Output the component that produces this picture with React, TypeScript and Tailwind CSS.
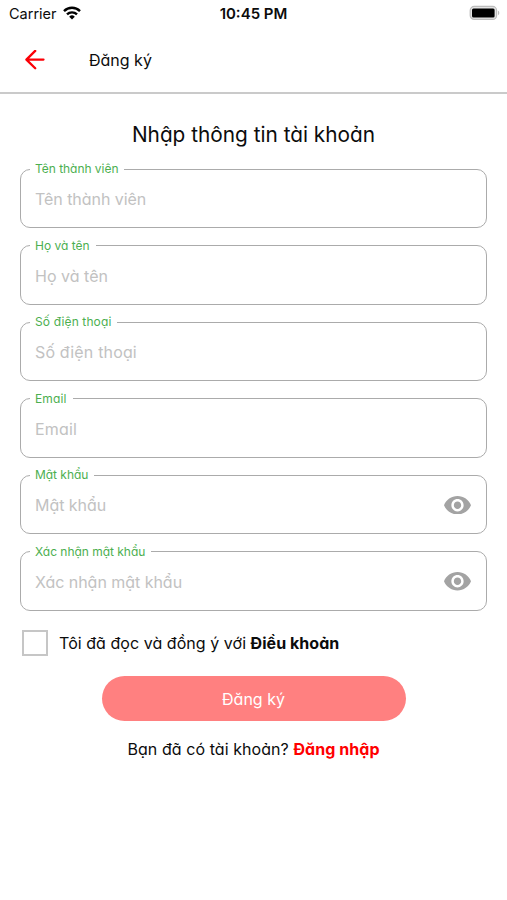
import React, { useState } from "react"
import clsx from "clsx"

const fields = [
	{ label: "Tên thành viên", spacing: "tracking-[-0.003em]" },
	{ label: "Họ và tên", spacing: "tracking-[0.001em]" },
	{ label: "Số điện thoại", spacing: "tracking-[0.01em]" },
	{ label: "Email", spacing: "tracking-[0.012em]" },
	{ label: "Mật khẩu", spacing: "tracking-[-0.003em]", secure: true },
	{ label: "Xác nhận mật khẩu", spacing: "tracking-[-0.002em]", secure: true },
]

const WifiIcon = () => (
	<svg viewBox="0 0 18 14" className="-mt-[2px] h-[14px] w-[18px]" fill="none" stroke="#000" strokeWidth="2.4">
		<path d="M1 5.1a11.4 11.4 0 0 1 16 0" />
		<path d="M4 8.4a7.1 7.1 0 0 1 10 0" />
		<path d="M9 13.6 6.2 10.7a4 4 0 0 1 5.6 0Z" fill="#000" stroke="none" />
	</svg>
)

const BatteryIcon = () => (
	<svg viewBox="0 0 32 16" className="-mt-px h-[16px] w-[32px]">
		<rect x="1.2" y="1.4" width="26.4" height="13" rx="4" fill="#e4e4e4" stroke="#bdbdbd" strokeWidth="1.2" />
		<rect x="3" y="3.4" width="22.6" height="9.2" rx="1.5" fill="#000" />
		<path d="M29 5.8c1.7.6 1.7 3.8 0 4.4Z" fill="#bdbdbd" />
	</svg>
)

const BackIcon = () => (
	<svg viewBox="0 0 20 20" className="h-5 w-5" fill="none" stroke="#fb0007" strokeWidth="2.3" strokeLinecap="round" strokeLinejoin="round">
		<path d="M18.5 9.6H1.5M10.2 .9 1.4 9.6l8.8 8.7" />
	</svg>
)

const EyeIcon = () => (
	<svg viewBox="1 4.5 22 15" className="-mt-px h-[18.5px] w-[27px]" fill="#a3a3a3">
		<path d="M12 4.5C7 4.5 2.73 7.61 1 12c1.73 4.39 6 7.5 11 7.5s9.27-3.11 11-7.5c-1.73-4.39-6-7.5-11-7.5zM12 17c-2.76 0-5-2.24-5-5s2.24-5 5-5 5 2.24 5 5-2.24 5-5 5zm0-8c-1.66 0-3 1.34-3 3s1.34 3 3 3 3-1.34 3-3-1.34-3-3-3z" />
	</svg>
)

const Field: React.FC<{ label: string; spacing: string; secure?: boolean }> = ({
	label,
	spacing,
	secure = false,
}) => {
	const [visible, setVisible] = useState(false)

	return (
		<fieldset className="h-[67px] min-w-0 rounded-[10px] border border-[#ababab] pl-[9px]">
			<legend className={clsx("h-4 whitespace-nowrap pl-[5px] pr-[6px] text-[12px] leading-4 text-[#4caf50]", spacing)}>
				{label}
			</legend>
			<div className="flex h-[44px] w-full items-center pl-[5px] pr-[15px]">
				<input
					type={secure && !visible ? "password" : "text"}
					placeholder={label}
					className={clsx("min-w-0 flex-1 bg-transparent text-[16px] outline-none placeholder:text-[#c2c2c2]", spacing)}
				/>
				{secure && (
					<button type="button" aria-label={label} onClick={() => setVisible(!visible)}>
						<EyeIcon />
					</button>
				)}
			</div>
		</fieldset>
	)
}

export default function RegisterScreen() {
	const [accepted, setAccepted] = useState(false)

	return (
		<div className="flex h-[900px] w-[507px] flex-col bg-white font-['Inter','Noto_Sans',sans-serif] text-[16px] text-[#0c0c0c] [font-feature-settings:'cv11']">
			{/* Status bar */}
			<div className="grid h-[27px] grid-cols-3 items-center pl-[9px] pr-[6px] [font-feature-settings:normal]">
				<div className="flex items-center gap-[6px] text-[14.5px]">
					Carrier
					<WifiIcon />
				</div>
				<div className="-ml-[3px] pt-[2px] text-center text-[15px] font-semibold">10:45 PM</div>
				<div className="flex justify-end">
					<BatteryIcon />
				</div>
			</div>

			<header className="flex h-[67px] items-center gap-[44px] border-b-2 border-[#cacaca] pl-[25px]">
				<button type="button" aria-label="Quay lại">
					<BackIcon />
				</button>
				<span>Đăng ký</span>
			</header>

			<main className="flex flex-col px-5">
				<h1 className="mt-[26px] text-center text-[20.8px] leading-[30px]">Nhập thông tin tài khoản</h1>

				<div className="mt-[11px] flex flex-col gap-[9.6px]">
					{fields.map((field) => (
						<Field key={field.label} {...field} />
					))}
				</div>

				<label className="mt-[19px] flex items-center gap-[11px] pl-[2px]">
					<input
						type="checkbox"
						checked={accepted}
						onChange={(e) => setAccepted(e.target.checked)}
						className="h-[26px] w-[26px] appearance-none border-2 border-[#c6c6c6] checked:bg-[#ff8080]"
					/>
					<span className="whitespace-nowrap pt-px tracking-[0.003em]">
						Tôi đã đọc và đồng ý với <b>Điều khoản</b>
					</span>
				</label>

				<button type="button" className="mx-auto mt-[20px] h-[45px] w-[304px] rounded-full bg-[#ff8080] pt-px text-white">
					Đăng ký
				</button>

				<p className="mt-[16px] text-center leading-6 tracking-[0.004em]">
					Bạn đã có tài khoản? <b className="text-[#ff0000]">Đăng nhập</b>
				</p>
			</main>
		</div>
	)
}
